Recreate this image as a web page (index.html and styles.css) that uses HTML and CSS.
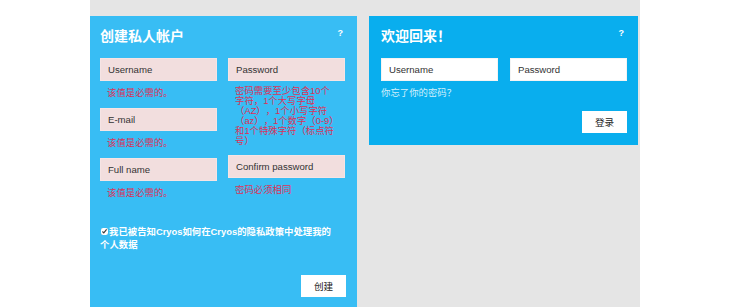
FILE: index.html
```html
<!DOCTYPE html>
<html lang="zh">
<head>
  <meta charset="UTF-8" />
  <meta name="viewport" content="width=device-width, initial-scale=1" />
  <title>Cryos</title>
  <link rel="stylesheet" href="styles.css">
</head>
<body>

  <div class="page">
    <div class="panels">

      <form class="panel register">
        <div class="panel-head">
          <h2>创建私人帐户</h2>
          <span class="help">?</span>
        </div>

        <div class="fields">
          <div class="col">
            <div class="field">
              <input type="text" class="invalid" placeholder="Username" />
              <div class="error">该值是必需的。</div>
            </div>
            <div class="field">
              <input type="text" class="invalid" placeholder="E-mail" />
              <div class="error">该值是必需的。</div>
            </div>
            <div class="field">
              <input type="text" class="invalid" placeholder="Full name" />
              <div class="error">该值是必需的。</div>
            </div>
          </div>
          <div class="col">
            <div class="field">
              <input type="password" class="invalid" placeholder="Password" />
              <div class="error hint">密码需要至少包含10个<br>字符，1个大写字母<br>（AZ），1个小写字符<br>（az），1个数字（0-9）<br>和1个特殊字符（标点符<br>号）</div>
            </div>
            <div class="field">
              <input type="password" class="invalid" placeholder="Confirm password" />
              <div class="error">密码必须相同</div>
            </div>
          </div>
        </div>

        <label class="consent">
          <input type="checkbox" checked />我已被告知Cryos如何在Cryos的隐私政策中处理我的<br>个人数据
        </label>

        <div class="actions">
          <button type="button">创建</button>
        </div>
      </form>

      <form class="panel login">
        <div class="panel-head">
          <h2>欢迎回来！</h2>
          <span class="help">?</span>
        </div>

        <div class="row">
          <input type="text" placeholder="Username" autofocus />
          <input type="password" placeholder="Password" />
        </div>
        <a href="#" class="forgot">你忘了你的密码？</a>

        <div class="actions">
          <button type="button">登录</button>
        </div>
      </form>

    </div>
  </div>

</body>
</html>
```

FILE: styles.css
```css
body {
  margin: 0;
  background: #fff;
  font-family: "Liberation Sans", "Noto Sans CJK SC", sans-serif;
  text-spacing-trim: space-all;
}

.page {
  width: 550px;
  min-height: 100vh;
  margin: 0 auto;
  padding-top: 16px;
  background: #e5e5e5;
  box-sizing: border-box;
}

.panels {
  display: flex;
  gap: 12px;
  align-items: flex-start;
}

.panel {
  color: #fff;
  margin: 0;
}

.register {
  width: 267px;
  padding: 10px 11px 10px 10px;
  box-sizing: border-box;
  background: #38bdf4;
}

.login {
  width: 269px;
  padding: 10px 11px 12px 12px;
  box-sizing: border-box;
  background: #09aeee;
}

.panel-head {
  display: flex;
  justify-content: space-between;
  height: 20px;
  margin-bottom: 12px;
}

.panel-head h2 {
  margin: 0;
  font-size: 14px;
  line-height: 20px;
  font-weight: bold;
}

.help {
  font-size: 9px;
  font-weight: bold;
  line-height: 12px;
  margin-top: 1px;
  padding-right: 3px;
}

input[type="text"],
input[type="password"] {
  width: 117px;
  height: 23px;
  padding: 0 7px;
  box-sizing: border-box;
  border: 1px solid #f4f4f4;
  background: #fff;
  font-family: inherit;
  font-size: 9.6px;
  color: #333;
  outline: none;
}

input::placeholder {
  color: #333;
  opacity: 1;
}

input.invalid {
  background: #f2dede;
  border-color: #f6e4e4;
}

.fields {
  display: flex;
  gap: 11px;
}

.col {
  display: flex;
  flex-direction: column;
}

.field {
  margin-bottom: 9px;
}

.error {
  margin-top: 6px;
  padding-left: 7px;
  font-size: 9.4px;
  line-height: 12px;
  color: #dc3158;
}

.error.hint {
  margin-top: 5px;
  line-height: 10px;
}

.consent {
  display: block;
  margin-top: 17px;
  font-size: 9.4px;
  font-weight: bold;
  line-height: 13px;
}

.consent input {
  width: 7px;
  height: 7px;
  margin: 0 1px 0 1px;
  vertical-align: 0;
  accent-color: #fff;
}

.row {
  display: flex;
  gap: 12px;
}

.forgot {
  display: block;
  margin-top: 6px;
  font-size: 9.4px;
  line-height: 12px;
  color: #d4f0fc;
  text-decoration: none;
}

.actions {
  display: flex;
  justify-content: flex-end;
}

.register .actions {
  margin-top: 24px;
}

.login .actions {
  margin-top: 12px;
}

.actions button {
  width: 45px;
  height: 22px;
  padding: 0;
  border: none;
  background: #fff;
  color: #222;
  font-family: inherit;
  font-size: 9.6px;
  cursor: pointer;
}
```
